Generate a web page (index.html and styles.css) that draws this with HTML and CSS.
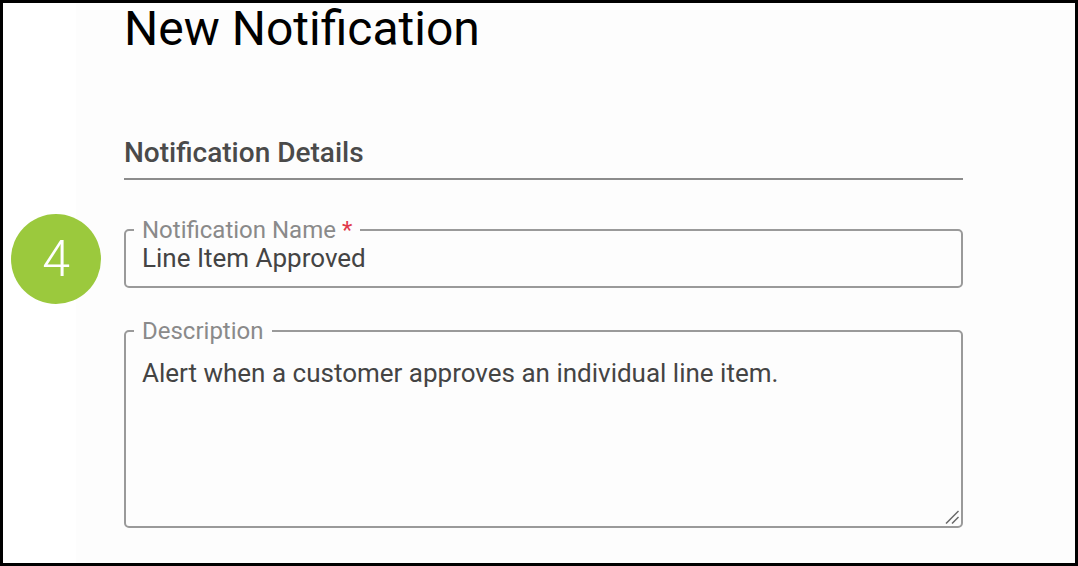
FILE: index.html
```html
<!DOCTYPE html>
<html>
<head>
<meta charset="utf-8">
<link rel="stylesheet" href="styles.css">
</head>
<body>
<div class="frame">
  <div class="gutter"></div>
  <main class="main">
    <h1 class="title">New Notification</h1>
    <h2 class="section">Notification Details</h2>
    <fieldset class="field field-name">
      <legend class="label">Notification Name <span class="req">*</span></legend>
      <div class="value">Line Item Approved</div>
    </fieldset>
    <fieldset class="field field-desc">
      <legend class="label">Description</legend>
      <div class="value">Alert when a customer approves an individual line item.</div>
      <div class="resize-row">
        <svg class="resizer" width="14" height="14" viewBox="0 0 14 14">
          <line x1="1" y1="13.5" x2="13.5" y2="1" stroke="#666" stroke-width="1.5"/>
          <line x1="7" y1="13.5" x2="13.5" y2="7" stroke="#666" stroke-width="1.5"/>
        </svg>
      </div>
    </fieldset>
  </main>
  <div class="badge">4</div>
</div>
</body>
</html>
```
FILE: styles.css
```css
html, body {
  margin: 0;
  padding: 0;
  background: #ffffff;
}
.frame {
  position: relative;
  box-sizing: border-box;
  width: 1078px;
  height: 566px;
  border: 3px solid #000;
  display: flex;
  overflow: hidden;
  font-family: Roboto, "Liberation Sans", sans-serif;
}
.gutter {
  width: 73px;
  background: #ffffff;
}
.main {
  flex: 1;
  background: #fdfdfd;
  padding: 0 112px 0 48px;
  display: flex;
  flex-direction: column;
}
.title {
  margin: 2px 0 0 0;
  font-size: 48px;
  line-height: 48px;
  font-weight: 400;
  color: #000;
}
.section {
  margin: 84px 0 0 0;
  padding-bottom: 9px;
  font-size: 28px;
  line-height: 32px;
  font-weight: 500;
  color: #4a4a4a;
  border-bottom: 2px solid #8c8c8c;
}
.field {
  margin: 0;
  padding: 0 16px;
  border: 2px solid #9a9a9a;
  border-radius: 5px;
  min-width: 0;
}
.field-name {
  margin-top: 38px;
  padding-bottom: 13px;
}
.field-desc {
  margin-top: 31px;
  padding-bottom: 2px;
}
.label {
  padding: 0 8px;
  margin-left: -8px;
  font-size: 24px;
  line-height: 24px;
  color: #8a8a8a;
}
.req {
  color: #e0394b;
}
.value {
  font-size: 26px;
  line-height: 30px;
  color: #444;
}
.field-name .value {
  padding-top: 1px;
}
.field-desc .value {
  box-sizing: border-box;
  height: 167px;
  padding-top: 15px;
}
.resize-row {
  display: flex;
  justify-content: flex-end;
  margin-right: -14px;
  height: 14px;
}
.resizer {
  display: block;
}
.badge {
  position: absolute;
  left: 8px;
  top: 211px;
  width: 90px;
  height: 90px;
  border-radius: 50%;
  background: #9bc93d;
  color: #fff;
  font-size: 50px;
  font-weight: 300;
  line-height: 90px;
  text-align: center;
}
```
